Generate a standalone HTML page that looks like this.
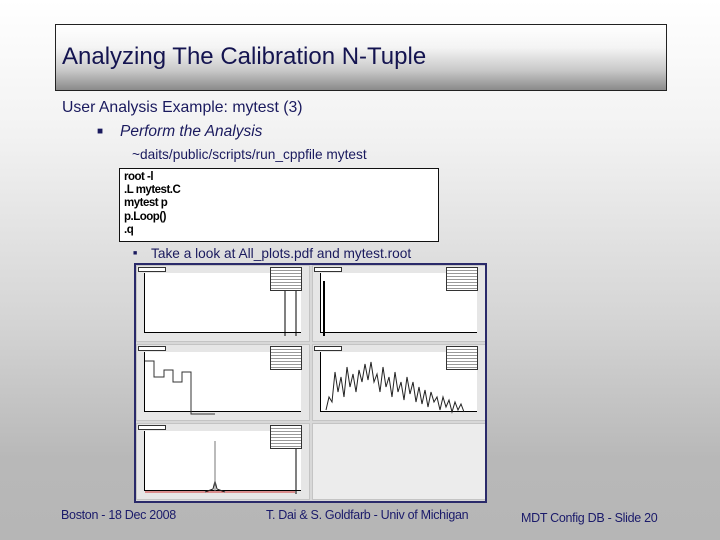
<!DOCTYPE html>
<html><head><meta charset="utf-8"><style>
*{margin:0;padding:0;box-sizing:border-box}
body{width:720px;height:540px;overflow:hidden;position:relative;font-family:"Liberation Sans",sans-serif;background:linear-gradient(to bottom,#ffffff 0%,#f2f2f2 25%,#d4d4d4 60%,#b8b8b8 85%,#b6b6b6 100%);color:#1a1a5e}
.title{position:absolute;left:55px;top:24px;width:612px;height:67px;border:1px solid #222;background:linear-gradient(to bottom,#fff 0%,#f4f4f4 35%,#c8c8c8 70%,#8a8a8a 100%)}
.title span{position:absolute;left:6px;top:18px;font-size:24px;color:#141450}
.t{position:absolute;white-space:nowrap}
.code{position:absolute;left:119px;top:168px;width:320px;height:74px;border:1px solid #111;background:#fff;font-size:11.5px;font-weight:bold;color:#000;padding:2px 4px;line-height:13.2px;letter-spacing:-0.5px}
.frame{position:absolute;left:134px;top:263px;width:353px;height:240px;border:2px solid #2a2a6a;background:#d8d8d8;overflow:hidden}
.cell{position:absolute;width:174px;height:77px;background:#e6e6e6;border:1px solid #c4c4c4}
.plot{position:absolute;left:7px;top:7px;right:8px;bottom:8px;background:#fff;border-left:1px solid #000;border-bottom:1px solid #000}
.lbl{position:absolute;left:1px;top:1px;width:28px;height:5px;background:#fff;border:1px solid #333}
.st{position:absolute;right:7px;top:1px;width:32px;height:24px;background:#fff;border:1px solid #333;background-image:repeating-linear-gradient(to bottom,#fff 0 2px,#999 2px 3px)}
.foot{position:absolute;top:508px;font-size:12.5px;color:#1a1a6a;letter-spacing:-0.3px}
</style></head><body>
<div class="title"><span>Analyzing The Calibration N-Tuple</span></div>
<div class="t" style="left:62px;top:99px;font-size:15.8px">User Analysis Example: mytest (3)</div>
<div class="t" style="left:97px;top:126px;font-size:10px">■</div>
<div class="t" style="left:120px;top:123px;font-size:15.5px;font-style:italic">Perform the Analysis</div>
<div class="t" style="left:132px;top:147px;font-size:13.7px">~daits/public/scripts/run_cppfile mytest</div>
<div class="code">root -l<br>.L mytest.C<br>mytest p<br>p.Loop()<br>.q</div>
<div class="t" style="left:133px;top:250px;font-size:7px">■</div>
<div class="t" style="left:151px;top:246px;font-size:13.7px">Take a look at All_plots.pdf and mytest.root</div>
<div class="frame">
 <div class="cell" style="left:0;top:0"><div class="plot"><svg width="159" height="63" style="position:absolute;left:0;top:0"><line x1="140" y1="10" x2="140" y2="63" stroke="#000"/><line x1="151" y1="10" x2="151" y2="63" stroke="#000"/></svg></div><div class="lbl"></div><div class="st"></div></div>
 <div class="cell" style="left:176px;top:0"><div class="plot"><svg width="159" height="63" style="position:absolute;left:0;top:0"><rect x="2" y="8" width="2" height="55" fill="#000"/></svg></div><div class="lbl"></div><div class="st"></div></div>
 <div class="cell" style="left:0;top:79px"><div class="plot"><svg width="159" height="63" style="position:absolute;left:0;top:0"><path d="M0 9H9V25H19V18H28V30H37V20H46V62H70" fill="none" stroke="#333"/></svg></div><div class="lbl"></div><div class="st"></div></div>
 <div class="cell" style="left:176px;top:79px"><div class="plot"><svg width="159" height="63" style="position:absolute;left:0;top:0"><path d="M5 58L8 45L11 50L14 20L17 40L20 25L23 45L26 15L29 35L32 22L35 40L38 18L41 30L44 12L47 28L50 10L53 30L56 22L59 40L62 15L65 35L68 25L71 45L74 20L77 40L80 30L83 48L86 25L89 42L92 30L95 50L98 35L101 52L104 38L107 55L110 40L113 50L116 45L119 58L122 45L125 55L128 48L131 60L134 50L137 58L140 52L143 60" fill="none" stroke="#222"/></svg></div><div class="lbl"></div><div class="st"></div></div>
 <div class="cell" style="left:0;top:158px"><div class="plot"><svg width="159" height="63" style="position:absolute;left:0;top:0"><line x1="0" y1="61" x2="150" y2="61" stroke="#c33"/><path d="M60 61L68 58L70 50L72 58L80 61" fill="none" stroke="#222"/><line x1="70" y1="10" x2="70" y2="60" stroke="#777"/><line x1="151" y1="8" x2="151" y2="63" stroke="#000"/></svg></div><div class="lbl"></div><div class="st"></div></div>
 <div class="cell" style="left:176px;top:158px;background:#ececec"></div>
</div>
<div class="foot" style="left:61px">Boston - 18 Dec 2008</div>
<div class="foot" style="left:266px">T. Dai &amp; S. Goldfarb - Univ of Michigan</div>
<div class="foot" style="left:521px;top:511px">MDT Config DB - Slide 20</div>
</body></html>
